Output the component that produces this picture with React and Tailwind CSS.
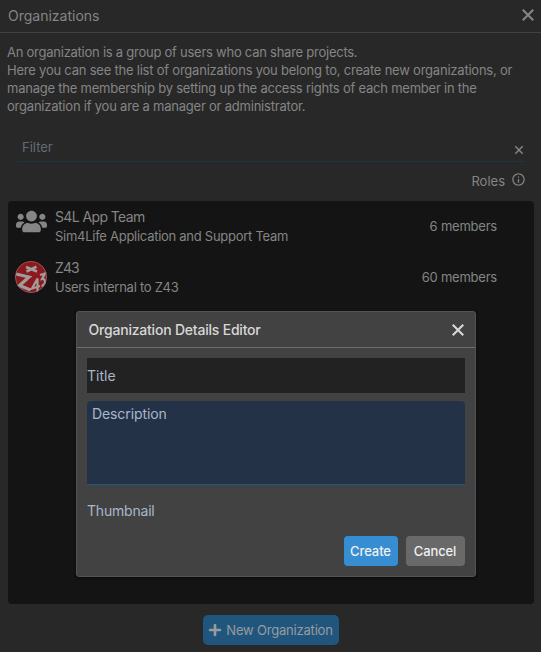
import { FaUsers, FaPlus } from "react-icons/fa";
import { MdInfoOutline } from "react-icons/md";

function CloseIcon({ size, className = "" }) {
  return (
    <svg viewBox="0 0 24 24" width={size} height={size} className={"shrink-0 " + className}>
      <path d="M5.700 5.700L18.300 18.300M18.300 5.700L5.700 18.300" fill="none" stroke="currentColor" strokeWidth="2.500" />
    </svg>
  );
}

function Z43Logo() {
  return (
    <svg viewBox="0 0 32 32" className="h-8 w-8 shrink-0">
      <defs>
        <clipPath id="disc">
          <circle cx="16" cy="16" r="16" />
        </clipPath>
      </defs>
      <g clipPath="url(#disc)">
        <rect width="32" height="32" fill="#8b191d" />
        <g fill="none" stroke="#a09c9c" strokeLinejoin="miter">
          <path d="M11 6L22 10.500M21.500 5.800L11.500 10.500" strokeWidth="2.700" />
          <path d="M1 13L14 16L4.500 24.500L15.500 29" strokeWidth="3.200" strokeLinejoin="miter" />
          <path d="M22.500 31V17.500L17 27.500L25 25" strokeWidth="2.300" />
          <path d="M25 14L30 12.500L27 18C31.500 17.500 31 24 26.500 25" strokeWidth="2.300" />
        </g>
        <circle cx="16" cy="16" r="15.600" fill="none" stroke="#8c6a6b" strokeWidth="0.800" />
      </g>
    </svg>
  );
}

function OrgRow({ icon, name, description, members, nameTracking }) {
  return (
    <div className="flex h-[51px] items-start pl-[7px] pr-[37px] pt-[5px]">
      <div className="flex w-8 shrink-0 justify-end">{icon}</div>
      <div className="ml-2 flex-1 whitespace-nowrap">
        <div className={"-mt-[3px] h-[20px] text-[14px] leading-[20px] " + nameTracking}>{name}</div>
        <div className="h-[18px] text-[13px] leading-[18px] tracking-[-0.27px]">{description}</div>
      </div>
      <div className="pt-[7px] text-[13px] leading-[18px] tracking-[-0.22px]">{members}</div>
    </div>
  );
}

function DetailsEditor() {
  return (
    <div className="absolute left-[76px] top-[311px] flex h-[266px] w-[400px] flex-col rounded-[3px] border border-[#51545b] bg-[#424242] shadow-[0_1px_3px_rgba(0,0,0,0.6)]">
      <div className="flex h-[36px] shrink-0 items-center justify-between border-b border-[#6b6e6c] pl-[11.5px] pr-[7px] text-[#d8d8d8]">
        <span className="text-[14px] font-medium tracking-[-0.21px]">Organization Details Editor</span>
        <CloseIcon size={20} />
      </div>
      <div className="flex flex-1 flex-col px-[10px] pt-[10px] text-[14px] text-[#a9b7c9]">
        <div className="flex h-[35px] shrink-0 items-center bg-[#222222]">Title</div>
        <div className="mt-2 h-[84px] shrink-0 rounded-t border-b border-[#1d5a85] bg-[#243248] pl-[5px] pt-[3px] leading-[20px] tracking-[-0.1px]">
          Description
        </div>
        <div className="mt-[16px] leading-[20px] tracking-[-0.2px]">Thumbnail</div>
        <div className="mt-[15px] flex justify-end gap-2 text-[13px] font-medium tracking-[-0.1px] text-[#f0f0f0]">
          <button className="h-[30px] w-[54px] rounded-[4px] bg-[#368dd1] pr-[1px] pt-[1px]">Create</button>
          <button className="h-[30px] w-[59px] rounded-[4px] bg-[#696969] pr-[1px] pt-[1px]">Cancel</button>
        </div>
      </div>
    </div>
  );
}

export default function App() {
  return (
    <div className="relative flex h-[652px] w-[541px] flex-col overflow-hidden bg-[#282828] font-['Inter',sans-serif] text-[#858585]">
      <header className="flex h-[33px] shrink-0 items-center justify-between border-b border-[#414141] pl-[8px] pr-[3px] pb-[2px]">
        <span className="text-[14px]">Organizations</span>
        <CloseIcon size={20} />
      </header>
      <div className="mt-[10px] h-[72px] whitespace-nowrap pl-[7px] text-[13px] leading-[18px]">
        <div className="tracking-[-0.25px]">An organization is a group of users who can share projects.</div>
        <div className="tracking-[-0.22px]">Here you can see the list of organizations you belong to, create new organizations, or</div>
        <div className="tracking-[-0.225px]">manage the membership by setting up the access rights of each member in the</div>
        <div className="tracking-[-0.215px]">organization if you are a manager or administrator.</div>
      </div>
      <div className="ml-[17px] mr-[16px] mt-[17px] flex h-[30px] items-center justify-between border-b border-[#20333f] pl-[5px]">
        <span className="pt-[2px] text-[13px] text-[#646b75]">Filter</span>
        <CloseIcon size={14} className="-mr-[1px] mt-[6px]" />
      </div>
      <div className="mr-[16px] mt-[9px] flex h-[20px] items-center justify-end gap-[6px]">
        <span className="pt-[1px] text-[13px]">Roles</span>
        <MdInfoOutline size={15} className="-mr-[1px] -mt-[4px]" />
      </div>
      <main className="ml-[8px] mr-[7px] mt-[10px] h-[403px] shrink-0 rounded-[4px] bg-[#141414] pt-[4px]">
        <OrgRow
          icon={<FaUsers size={31} className="-mt-[4px] mr-[0.500px] shrink-0" />}
          name="S4L App Team"
          description="Sim4Life Application and Support Team"
          members="6 members"
          nameTracking="tracking-[-0.62px]"
        />
        <OrgRow
          icon={<Z43Logo />}
          name="Z43"
          description="Users internal to Z43"
          members="60 members"
          nameTracking="tracking-[-0.9px]"
        />
      </main>
      <button className="ml-[203px] mt-[11px] flex h-[30px] w-[136px] items-center justify-center gap-[4px] rounded-[5px] bg-[#20567d] pr-[1px] text-[13px] tracking-[-0.2px] text-[#999b9d]">
        <FaPlus size={14} />
        <span className="pt-[1px]">New Organization</span>
      </button>
      <DetailsEditor />
    </div>
  );
}
